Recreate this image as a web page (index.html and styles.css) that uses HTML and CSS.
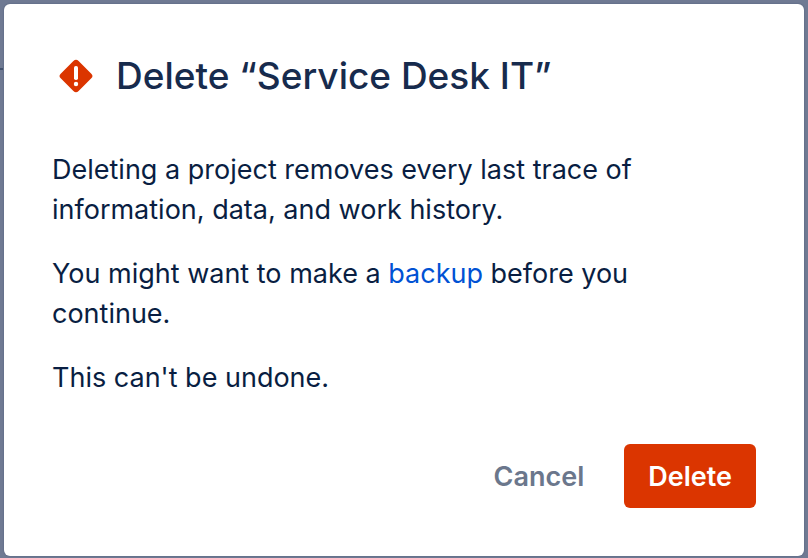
FILE: index.html
```html
<!DOCTYPE html>
<html lang="en">
<head>
    <meta charset="UTF-8">
    <meta name="viewport" content="width=device-width, initial-scale=1.0">
    <title>Delete project</title>
    <link rel="stylesheet" href="styles.css">
</head>
<body>
    <div class="page-line"></div>
    <div class="dialog" role="alertdialog" aria-modal="true" aria-labelledby="dialog-title">
        <div class="dialog-header">
            <svg class="icon" viewBox="0 0 48 48" aria-hidden="true">
                <path fill="#db3500" d="M21.4 9a3.7 3.7 0 0 1 5.2 0l12.7 12.7a3.2 3.2 0 0 1 0 4.6L26.6 39a3.7 3.7 0 0 1-5.2 0L8.7 26.3a3.2 3.2 0 0 1 0-4.6z"/>
                <rect fill="#fff" x="22" y="14" width="4" height="14" rx="1.8"/>
                <circle fill="#fff" cx="24" cy="32" r="2.2"/>
            </svg>
            <h1 class="title" id="dialog-title">Delete “Service Desk IT”</h1>
        </div>
        <div class="dialog-body">
            <p>Deleting a project removes every last trace of information, data, and work history.</p>
            <p>You might want to make a <a href="#">backup</a> before you continue.</p>
            <p>This can't be undone.</p>
        </div>
        <div class="dialog-footer">
            <button type="button" class="button">Cancel</button>
            <button type="button" class="button danger">Delete</button>
        </div>
    </div>
</body>
</html>
```

FILE: styles.css
```css
* {
    box-sizing: border-box;
}

body {
    margin: 0;
    padding: 4px 4px 2px;
    background-color: #6f7a93;
    color: #091e42;
    font-family: Inter, "Liberation Sans", sans-serif;
    font-size: 27px;
    line-height: 40px;
}

/* bit of the page behind the dialog */
.page-line {
    position: absolute;
    top: 68px;
    left: 0;
    width: 3px;
    height: 2px;
    background-color: #42526e;
}

.dialog {
    padding: 48px;
    background-color: #fff;
    border-radius: 6px;
    box-shadow: 0 0 2px rgba(9, 30, 66, 0.3);
}

.dialog-header {
    display: flex;
    align-items: center;
    gap: 16px;
}

.icon {
    flex: none;
    width: 48px;
    height: 48px;
}

.title {
    margin: 0;
    color: #172b4d;
    font-size: 37px;
    font-weight: 550;
    line-height: 48px;
}

.dialog-body {
    display: flex;
    flex-direction: column;
    gap: 24px;
    padding: 50px 16px 46px 0;
}

.dialog-body p {
    margin: 0;
}

.dialog-body a {
    color: #0052d4;
    text-decoration: none;
}

.dialog-body a:hover {
    text-decoration: underline;
}

.dialog-footer {
    display: flex;
    justify-content: flex-end;
    gap: 16px;
}

.button {
    padding: 13px 24px 11px;
    border: none;
    border-radius: 6px;
    background: none;
    color: #6b778c;
    font: inherit;
    font-weight: 600;
    cursor: pointer;
}

.danger {
    background-color: #db3500;
    color: #fff;
}
```
